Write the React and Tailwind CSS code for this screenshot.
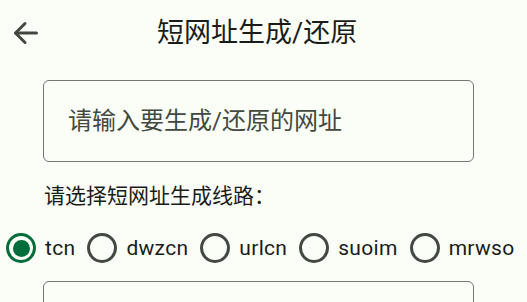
import React from "react";

const font = { fontFamily: 'Roboto, "Noto Sans CJK SC", sans-serif' };

function Radio({ label, checked }) {
  return (
    <div className="flex items-center">
      {checked ? (
        <div className="w-[30px] h-[30px] rounded-full border-[3px] border-[#006d3a] flex items-center justify-center">
          <div className="w-[17px] h-[17px] rounded-full bg-[#006d3a]" />
        </div>
      ) : (
        <div className="w-[30px] h-[30px] rounded-full border-[3px] border-[#42493f]" />
      )}
      <span className="ml-[9px] text-[21px] leading-none tracking-[0.3px] text-[#1a1c19]">{label}</span>
    </div>
  );
}

export default function App() {
  return (
    <div
      className="w-[527px] h-[302px] bg-[#fbfdf7] overflow-hidden flex flex-col"
      style={font}
    >
      <div className="h-[66px] flex items-center shrink-0">
        <svg
          className="ml-[13px] shrink-0"
          width="25"
          height="24"
          viewBox="0 0 25 24"
          fill="none"
          stroke="#43483f"
          strokeWidth="3"
          strokeLinecap="round"
          strokeLinejoin="round"
        >
          <path d="M23.5 12H2.5" />
          <path d="M12 2.5L2.5 12L12 21.5" />
        </svg>
        <div className="ml-[119px] text-[27px] leading-none text-[#1a1c19]">
          短网址生成/还原
        </div>
      </div>

      <div className="mt-[14px] ml-[43px] w-[431px] h-[82px] shrink-0 rounded-[6px] border-[1.5px] border-[#72796f] flex items-center pl-[24px]">
        <span className="text-[24px] leading-none text-[#42493f]">请输入要生成/还原的网址</span>
      </div>

      <div className="mt-[24px] ml-[44px] text-[21px] leading-none text-[#1a1c19] shrink-0">
        请选择短网址生成线路：
      </div>

      <div className="mt-[26px] ml-[6px] flex items-center gap-[12px] shrink-0">
        <Radio label="tcn" checked />
        <Radio label="dwzcn" />
        <Radio label="urlcn" />
        <Radio label="suoim" />
        <Radio label="mrwso" />
      </div>

      <div className="mt-[18px] ml-[43px] w-[431px] h-[82px] shrink-0 rounded-[6px] border-[1.5px] border-[#72796f]" />
    </div>
  );
}
